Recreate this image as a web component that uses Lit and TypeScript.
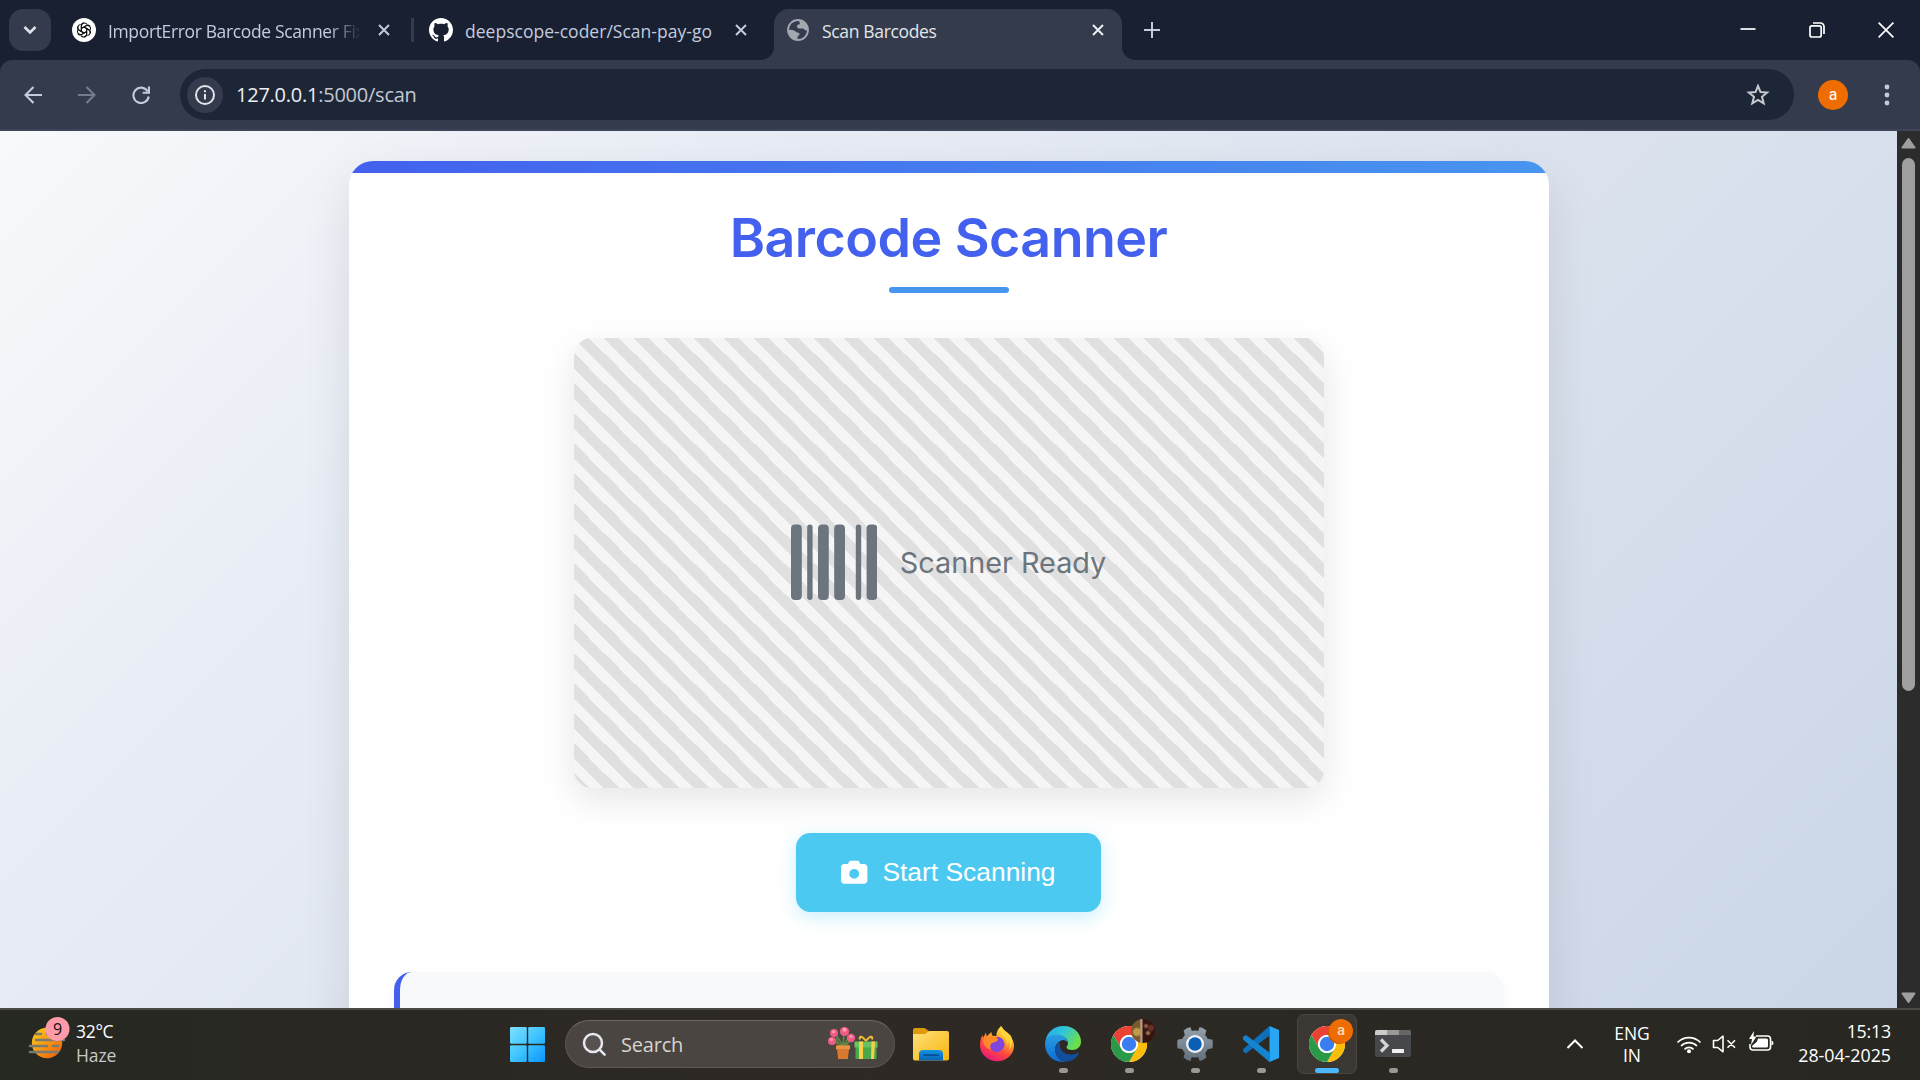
import { LitElement, html, css, svg } from "lit";
import { customElement } from "lit/decorators.js";

const closeGlyph = (cls: string) => html`<svg class="x ${cls}" viewBox="0 0 12 12"><path d="M1 1l10 10M11 1L1 11" /></svg>`;

const chromeLogo = html`<svg class="logo" viewBox="0 0 48 48">
  <circle cx="24" cy="24" r="24" fill="#fff" />
  <path d="M3.2 12A24 24 0 0 1 44.8 12L24 12A12 12 0 0 0 13.6 30Z" fill="#ea4335" />
  <path d="M44.8 12A24 24 0 0 1 24 48L34.4 30A12 12 0 0 0 24 12Z" fill="#fbbc0b" />
  <path d="M24 48A24 24 0 0 1 3.2 12L13.6 30A12 12 0 0 0 34.4 30Z" fill="#2a9a48" />
  <circle cx="24" cy="24" r="12" fill="#fff" />
  <circle cx="24" cy="24" r="9.6" fill="#3a7df0" />
</svg>`;

@customElement("browser-tabs")
class BrowserTabs extends LitElement {
  static styles = css`
    :host { display: flex; height: 60px; background: #182031; font-family: "Open Sans", "Noto Sans", sans-serif; font-size: 17.5px; color: #c3cbdf; }
    .search { box-sizing: border-box; width: 42px; height: 42px; margin: 9px 0 0 9px; border-radius: 14px; background: #333b4c; display: flex; align-items: center; justify-content: center; }
    .search svg { width: 14px; height: 10px; fill: none; stroke: #dfe2ea; stroke-width: 2.6; }
    .tab { box-sizing: border-box; display: flex; align-items: center; height: 51px; margin-top: 9px; padding-bottom: 9px; }
    .t1 { width: 360px; padding-left: 21px; }
    .t2 { width: 348px; padding-left: 15px; }
    .t3 { width: 348px; margin-left: 12px; padding-left: 13px; background: #333b4c; border-radius: 15px 15px 0 0; color: #e3e5ea; position: relative; }
    .t3::before, .t3::after { content: ""; position: absolute; bottom: 0; width: 13px; height: 13px; }
    .t3::before { left: -13px; background: radial-gradient(circle at 0 0, transparent 12.6px, #333b4c 13.2px); }
    .t3::after { right: -13px; background: radial-gradient(circle at 100% 0, transparent 12.6px, #333b4c 13.2px); }
    .fav { width: 24px; height: 24px; flex: none; }
    .fav.small { width: 22px; height: 22px; }
    .title { margin-left: 12px; white-space: nowrap; overflow: hidden; line-height: 30px; padding-top: 1px; height: 30px; }
    .t1 .title { width: 251px; letter-spacing: -0.36px; -webkit-mask-image: linear-gradient(90deg, #000 220px, transparent 254px); mask-image: linear-gradient(90deg, #000 220px, transparent 254px); }
    .t2 .title { width: 250px; letter-spacing: 0.02px; }
    .t3 .title { width: 250px; margin-left: 13px; letter-spacing: -0.34px; }
    .x { width: 12px; height: 12px; fill: none; stroke: #c3cbdf; stroke-width: 2; margin-left: 19px; flex: none; }
    .x.lit { stroke: #eceef2; margin-left: 20px; }
    .t2 .x { margin-left: 20px; }
    .sep { width: 3px; height: 24px; margin-top: 18px; background: #333b4c; }
    .plus { width: 16px; height: 16px; margin: 22px 0 0 22px; fill: none; stroke: #c3cbdf; stroke-width: 2; }
    .controls { display: flex; margin: 22px 26.5px 0 auto; gap: 53px; }
    .controls svg { width: 16px; height: 16px; fill: none; stroke: #fff; stroke-width: 1.7; }
  `;
  render() {
    return html`
      <div class="search"><svg viewBox="0 0 14 10"><path d="M1.5 2l5.5 5.5L12.5 2" /></svg></div>
      <div class="tab t1">
        <svg class="fav" viewBox="0 0 24 24"><circle cx="12" cy="12" r="12" fill="#fff" />
          <g fill="none" stroke="#111" stroke-width="1.05">
            ${[0, 60, 120, 180, 240, 300].map((a) => svg`<path transform="rotate(${a} 12 12)" d="M9.4 13.6V8.1a3.1 3.1 0 0 1 5.6-1.7M9.4 10.4l4.8-2.8a3.1 3.1 0 0 1 4 .8" />`)}
          </g></svg>
        <span class="title">ImportError Barcode Scanner Fix</span>${closeGlyph("")}
      </div>
      <div class="sep"></div>
      <div class="tab t2">
        <svg class="fav" viewBox="0 0 16 16"><path fill="#fff" d="M8 0C3.58 0 0 3.58 0 8c0 3.54 2.29 6.53 5.47 7.59.4.07.55-.17.55-.38 0-.19-.01-.82-.01-1.49-2.01.37-2.53-.49-2.69-.94-.09-.23-.48-.94-.82-1.13-.28-.15-.68-.52-.01-.53.63-.01 1.08.58 1.23.82.72 1.21 1.87.87 2.33.66.07-.52.28-.87.51-1.07-1.78-.2-3.64-.89-3.64-3.95 0-.87.31-1.59.82-2.15-.08-.2-.36-1.02.08-2.12 0 0 .67-.21 2.2.82.64-.18 1.32-.27 2-.27s1.36.09 2 .27c1.53-1.04 2.2-.82 2.2-.82.44 1.1.16 1.92.08 2.12.51.56.82 1.27.82 2.15 0 3.07-1.87 3.75-3.65 3.95.29.25.54.73.54 1.48 0 1.07-.01 1.93-.01 2.2 0 .21.15.46.55.38A8.01 8.01 0 0 0 16 8c0-4.42-3.58-8-8-8z" /></svg>
        <span class="title">deepscope-coder/Scan-pay-go</span>${closeGlyph("")}
      </div>
      <div class="tab t3">
        <svg class="fav small" viewBox="0 0 22 22"><circle cx="11" cy="11" r="10" fill="#333b4c" stroke="#a3a7ae" stroke-width="1.8" />
          <path fill="#a3a7ae" d="M11.5 1c5.2.3 9.3 4.5 9.5 9.5-.8 1-1.7 1.2-2.7.8-1-.5-1.3-1.6-2.6-1.8h-3.2c-1.6 0-2.5-.9-2.5-2.3 0-1 .5-1.6 1.4-1.7 1-.1 1.7-.5 1.4-1.6-.2-1-.9-1.6-1.3-2.900zM1 11c2.500-.4 4.500-.2 6.500.8 1.700.8 2 1.900 3.700 2 1.300.1 1.700 1 1.200 2-.6 1.200-1.900 1.100-1.900 2.500V21C5 20.700 1 16.500 1 11z" /></svg>
        <span class="title">Scan Barcodes</span>${closeGlyph("lit")}
      </div>
      <svg class="plus" viewBox="0 0 16 16"><path d="M8 0v16M0 8h16" /></svg>
      <div class="controls">
        <svg viewBox="0 0 16 16"><path d="M.5 7h15" /></svg>
        <svg viewBox="0 0 16 16"><rect x="1" y="3.8" width="11.2" height="11.2" rx="2" /><path d="M4 1h7.500a3.500 3.500 0 0 1 3.500 3.500v7.500" /></svg>
        <svg viewBox="0 0 16 16"><path d="M.6.6l14.800 14.800M15.400.6L.6 15.400" /></svg>
      </div>`;
  }
}

@customElement("browser-toolbar")
class BrowserToolbar extends LitElement {
  static styles = css`
    :host { display: block; background: #182031; }
    .bar { box-sizing: border-box; height: 71px; display: flex; align-items: flex-start; padding-top: 9px; background: #333b4c; border-radius: 12px 12px 0 0; border-bottom: 2px solid #3e4558; font-family: "Open Sans", "Noto Sans", sans-serif; }
    .nav { display: flex; align-items: center; gap: 36px; height: 51px; margin-left: 24px; width: 156px; }
    .nav svg { width: 18px; height: 18px; fill: none; stroke: #c3cbdf; stroke-width: 2.1; flex: none; }
    .nav .off { stroke: #757c8a; }
    .omni { box-sizing: border-box; width: 1614px; height: 51px; border-radius: 26px; background: #1d2636; display: flex; align-items: center; padding: 0 24px 0 7px; }
    .info { width: 36px; height: 36px; border-radius: 50%; background: #333b4c; display: flex; align-items: center; justify-content: center; }
    .info svg { width: 20px; height: 20px; fill: none; stroke: #e3e5ea; stroke-width: 2; }
    .url { margin-left: 13px; font-size: 20px; letter-spacing: -0.24px; color: #c4c8d1; line-height: 30px; }
    .url b { font-weight: 400; color: #eceef2; }
    .star { width: 24px; height: 24px; margin-left: auto; fill: none; stroke: #c7c9cf; stroke-width: 2; }
    .avatar { width: 30px; height: 30px; margin: 11px 0 0 24px; border-radius: 50%; background: #ef6c00; color: #fff; font: 16px/29px Roboto, sans-serif; text-align: center; }
    .dots { width: 6px; height: 24px; margin: 14px 0 0 36px; fill: #c3cbdf; }
  `;
  render() {
    return html`<div class="bar">
      <div class="nav">
        <svg viewBox="0 0 18 18"><path d="M18 9H1.800M9.500 1L1.500 9l8 8" /></svg>
        <svg class="off" viewBox="0 0 18 18"><path d="M0 9h16.200M8.500 1l8 8-8 8" /></svg>
        <svg viewBox="0 0 18 18"><path d="M15.600 5.200A7.700 7.700 0 1 0 16.700 10.500M17 .5v6.300h-6.300" /></svg>
      </div>
      <div class="omni">
        <span class="info"><svg viewBox="0 0 20 20"><circle cx="10" cy="10" r="9" /><path d="M10 9v5.500M10 5.300v2" /></svg></span>
        <span class="url"><b>127.0.0.1</b>:5000/scan</span>
        <svg class="star" viewBox="0 0 24 24"><path d="M12 3l2.500 6.100 6.600.5-5.100 4.200 1.700 6.500L12 16.800l-5.700 3.500L8 13.800 2.900 9.600l6.600-.5z" /></svg>
      </div>
      <div class="avatar">a</div>
      <svg class="dots" viewBox="0 0 6 24"><circle cx="3" cy="4" r="2.4" /><circle cx="3" cy="12" r="2.4" /><circle cx="3" cy="20" r="2.4" /></svg>
    </div>`;
  }
}

@customElement("scanner-page")
class ScannerPage extends LitElement {
  static styles = css`
    :host { display: flex; height: 877px; overflow: hidden; }
    .view { flex: 1; height: 1382px; background: linear-gradient(135deg, #f8f9fb 0%, #e9edf5 21%, #c3d0e3 100%); display: flex; justify-content: center; }
    .lift { width: 1200px; height: 1322px; margin-top: 30px; border-radius: 24px; box-shadow: 0 18px 48px rgba(0, 0, 0, 0.1); }
    .card { box-sizing: border-box; width: 1200px; height: 1322px; border-radius: 24px; overflow: hidden; background: #fff; display: flex; flex-direction: column; align-items: center; }
    .stripe { width: 100%; height: 12px; flex: none; background: linear-gradient(90deg, #4361ee, #4895ef); }
    h1 { margin: 32px 0 0; font: 600 53.76px/65px Inter, sans-serif; letter-spacing: -0.55px; color: #4361ee; }
    .rule { width: 120px; height: 6px; margin-top: 17px; border-radius: 3px; background: #4895ef; }
    .scanner { width: 750px; height: 450px; margin-top: 45px; flex: none; border-radius: 18px; box-shadow: 0 12px 36px rgba(0, 0, 0, 0.1); background-color: #f5f5f5; background-image: linear-gradient(45deg, #e0e0e0 25%, transparent 25%, transparent 50%, #e0e0e0 50%, #e0e0e0 75%, transparent 75%, transparent); background-size: 30px 30px; display: flex; align-items: center; justify-content: center; gap: 22.8px; color: #6c757d; font: 28.8px/40px Inter, sans-serif; }
    .scanner svg { width: 86.4px; height: 86.4px; margin-bottom: 2px; fill: #6c757d; }
    .start { box-sizing: border-box; width: 305px; height: 79px; margin-top: 45px; flex: none; border: 0; border-radius: 14.4px; background: #4cc9f0; color: #fff; font: 26.4px/30px "Liberation Sans", Arial, sans-serif; display: flex; align-items: center; justify-content: center; gap: 14.6px; box-shadow: 0 5px 18px rgba(76, 201, 240, 0.3); padding: 0; }
    .start span { padding-bottom: 2px; }
    .start svg { width: 26.4px; height: 26.4px; fill: #fff; }
    .result { box-sizing: border-box; width: 1110px; height: 300px; margin-top: 60px; border-left: 6px solid #4361ee; border-radius: 18px; background: #f8f9fb; box-shadow: 0 5px 18px rgba(0, 0, 0, 0.03); }
    .scroll { width: 23px; height: 877px; background: #2c2c2c; display: flex; flex-direction: column; align-items: center; }
    .scroll svg { width: 15px; height: 12px; fill: #9f9f9f; stroke: #9f9f9f; stroke-width: 2; stroke-linejoin: round; }
    .up { margin-top: 6px; }
    .thumb { width: 13px; height: 533px; margin-top: 9px; border-radius: 7px; background: #9f9f9f; }
    .down { margin: auto 0 4px; }
  `;
  render() {
    const bars = [[0, 64], [96, 32], [160, 64], [256, 64], [384, 32], [448, 64]];
    return html`
      <div class="view"><div class="lift"><div class="card">
        <div class="stripe"></div>
        <h1>Barcode Scanner</h1>
        <div class="rule"></div>
        <div class="scanner">
          <svg viewBox="0 0 512 512">${bars.map(([x, w]) => svg`<rect x=${x} y="32" width=${w} height="448" rx=${w === 64 ? 24 : 16} />`)}</svg>
          <span>Scanner Ready</span>
        </div>
        <button class="start">
          <svg viewBox="0 0 512 512"><path d="M149.100 64.800L138.700 96H64C28.700 96 0 124.700 0 160V416c0 35.300 28.700 64 64 64H448c35.300 0 64-28.700 64-64V160c0-35.300-28.700-64-64-64H373.300L362.900 64.800C356.400 45.200 338.100 32 317.400 32H194.600c-20.700 0-39 13.200-45.500 32.800zM256 192a96 96 0 1 1 0 192 96 96 0 1 1 0-192z" /></svg>
          <span>Start Scanning</span>
        </button>
        <div class="result"></div>
      </div></div></div>
      <div class="scroll">
        <svg class="up" viewBox="0 0 15 12"><path d="M7.500 2L13.500 10.500H1.500z" /></svg>
        <div class="thumb"></div>
        <svg class="down" viewBox="0 0 15 12"><path d="M7.500 10L13.500 1.500H1.500z" /></svg>
      </div>`;
  }
}

@customElement("task-bar")
class TaskBar extends LitElement {
  static styles = css`
    :host { box-sizing: border-box; display: flex; height: 72px; border-top: 2px solid #4a4945; background: linear-gradient(90deg, #262822 0%, #2b2824 22%, #2e2925 45%, #2b2823 75%, #282721 100%); color: #fff; font-family: "Open Sans", "Noto Sans", sans-serif; }
    .weather { box-sizing: border-box; width: 494px; padding-left: 28px; display: flex; }
    .weather svg { width: 42px; height: 46px; margin-top: 6px; }
    .weather div { margin: 9px 0 0 6px; font-size: 17.5px; line-height: 24px; letter-spacing: -0.3px; }
    .weather .cond { color: #c9c9c7; display: block; letter-spacing: -0.1px; }
    .badge { font: 16px "Open Sans", sans-serif; fill: #111; text-anchor: middle; }
    .start { width: 66px; display: flex; justify-content: center; padding-top: 17px; }
    .start svg { width: 35px; height: 35px; }
    .search { box-sizing: border-box; width: 330px; height: 48px; margin: 10px 3px 0 5px; border-radius: 24px; border: 1.5px solid #5b5753; border-top-color: #6d6966; background: #4a4541; display: flex; align-items: center; padding: 0 16px; font-size: 20px; color: #d6d4d1; }
    .lens { width: 24px; height: 24px; fill: #57524f; stroke: #e6e8ef; stroke-width: 2.5; stroke-linecap: round; }
    .search span { margin-left: 15px; letter-spacing: -0.2px; }
    .gift { width: 50px; height: 34px; margin-left: auto; }
    .app { width: 66px; height: 70px; display: flex; flex-direction: column; align-items: center; position: relative; }
    .app.on::before { content: ""; position: absolute; left: 3px; top: 4px; width: 58px; height: 58px; border: 1px solid #494541; border-radius: 7px; background: #3b3733; }
    .logo { width: 36px; height: 36px; margin-top: 16px; flex: none; position: relative; }
    .dot { width: 9px; height: 5px; margin-top: 6px; border-radius: 3px; background: #9b9894; position: relative; }
    .on .dot { width: 24px; background: #4cb8ff; }
    .face { position: absolute; left: 35px; top: 9px; width: 24px; height: 24px; border-radius: 50%; text-align: center; font: 500 15px/23px Roboto, sans-serif; color: #ffd9bd; }
    .photo { background:
      radial-gradient(circle at 15px 7px, #8f5f48 0 1px, transparent 3px),
      radial-gradient(circle at 17px 14px, #9d7358 0 1px, transparent 3px),
      radial-gradient(circle at 20px 9px, #6d3026 0 2px, transparent 4px),
      radial-gradient(circle at 6px 13px, #c39a4c 0 3px, transparent 5px),
      linear-gradient(90deg, #7a5c2c 0 38%, #b89a8c 40% 46%, #35160f 50%); }
    .a { background: #ef6c00; box-shadow: -2px 2px 0 -1px #c85c08; }
    .tray { margin-left: auto; display: flex; padding-right: 29px; }
    .tray svg { fill: none; stroke: #fff; stroke-width: 2; }
    .chev { width: 18px; height: 12px; margin-top: 28px; }
    .lang { width: 60px; margin: 12px 0 0 18px; text-align: center; font-size: 17.5px; line-height: 22px; }
    .wifi { width: 26px; height: 20px; margin: 24px 0 0 14px; }
    .vol { width: 25px; height: 20px; margin: 24px 0 0 10px; }
    .bat { width: 26px; height: 22px; margin: 21px 0 0 11px; }
    .clock { margin: 9px 0 0 17px; width: 100px; text-align: right; font-size: 17.8px; line-height: 24px; white-space: nowrap; }
    .time { letter-spacing: -0.2px; }
  `;
  render() {
    const dot = html`<span class="dot"></span>`;
    return html`
      <div class="weather">
        <svg viewBox="28 1014 42 46">
          <defs><linearGradient id="sun" x1="0" y1="0" x2="1" y2="1"><stop offset="0" stop-color="#ffd21c" /><stop offset="1" stop-color="#ee5a08" /></linearGradient></defs>
          <circle cx="47" cy="1041" r="15.2" fill="url(#sun)" />
          <g stroke="#7b7a70" stroke-width="2.6" stroke-linecap="round"><path d="M36 1032h5M47 1032h4M36 1038h28M30 1044h17M53 1044h5M30 1050h28" /></g>
          <circle cx="57.5" cy="1027" r="12" fill="#ff9aa8" />
          <text class="badge" x="57.5" y="1032.5">9</text>
        </svg>
        <div>32°C<span class="cond">Haze</span></div>
      </div>
      <div class="start"><svg viewBox="0 0 35 35">
        <defs><linearGradient id="win" gradientUnits="userSpaceOnUse" x1="0" y1="0" x2="35" y2="35"><stop offset="0" stop-color="#7fe0ff" /><stop offset=".5" stop-color="#3fc5ff" /><stop offset="1" stop-color="#0795ff" /></linearGradient></defs>
        <g fill="url(#win)"><rect width="16.8" height="16.8" rx="1.3" /><rect x="18.2" width="16.8" height="16.8" rx="1.3" /><rect y="18.2" width="16.8" height="16.8" rx="1.3" /><rect x="18.2" y="18.2" width="16.8" height="16.8" rx="1.3" /></g></svg></div>
      <div class="search">
        <svg class="lens" viewBox="0 0 24 24"><circle cx="11" cy="11" r="9" /><path d="M17.600 17.600l5 5" /></svg>
        <span>Search</span>
        <svg class="gift" viewBox="0 0 50 34">
          <path d="M15 19L5 14M15 19L7 6M15 19l1-12M15 19l8-12M15 19l10-7M12 19l-4-8M18 19l4-6" stroke="#5c8443" stroke-width="1.6" fill="none" />
          <g fill="#ef5b83"><circle cx="6" cy="6" r="4" /><circle cx="16.5" cy="4.5" r="4.6" /><circle cx="4" cy="14" r="4" /><circle cx="23" cy="11" r="4.2" /></g>
          <g fill="#ff9bb0"><circle cx="5.5" cy="4.8" r="1.6" /><circle cx="16.5" cy="2.8" r="2" /><circle cx="3.4" cy="12.6" r="1.6" /><circle cx="23" cy="9.5" r="1.6" /></g>
          <path d="M8 18.500h14v4h-1l-1.200 9.500H10.200L9 22.500H8z" fill="#d9792f" /><path d="M8 18.500h14v3.500H8z" fill="#e89244" />
          <rect x="27.5" y="19" width="21" height="13" fill="#48a84a" /><rect x="26.5" y="14.5" width="23" height="6" fill="#65c25c" />
          <path d="M31 14.500h4V32h-4zM43.500 14.500h3.500L46 32h-3z" fill="#f6d04b" />
          <path d="M38 14c-5-7-7-4-6-1.500M38 14c5-7 7-4 6-1.500" stroke="#f2bd35" stroke-width="2" fill="none" />
        </svg>
      </div>
      <div class="app"><svg class="logo" viewBox="0 0 36 36">
        <defs><linearGradient id="fol" x1="0" y1="0" x2="1" y2="1"><stop offset="0" stop-color="#ffe07a" /><stop offset="1" stop-color="#f9b50f" /></linearGradient><linearGradient id="fb" x1="0" y1="0" x2="0" y2="1"><stop offset="0" stop-color="#1593e2" /><stop offset="1" stop-color="#0864b8" /></linearGradient></defs>
        <path d="M0 4a2 2 0 0 1 2-2h9q1 0 2 1l3 2v6H0z" fill="#dd9a08" /><path d="M0 8h11q1.500 0 3-1.500T17 5h17q2 0 2 2v25.500q0 2-2 2H2q-2 0-2-2z" fill="url(#fol)" />
        <path d="M6 34.500V28q0-4 4-4h16q4 0 4 4v6.500z" fill="url(#fb)" /><path d="M11 29.200h14" stroke="#064f96" stroke-width="1.7" stroke-linecap="round" /></svg></div>
      <div class="app"><svg class="logo" viewBox="0 0 36 36">
        <defs><linearGradient id="ff" x1=".8" y1="0" x2=".3" y2="1"><stop offset="0" stop-color="#fff04a" /><stop offset=".35" stop-color="#ffae26" /><stop offset=".65" stop-color="#ff4b3c" /><stop offset="1" stop-color="#e8157e" /></linearGradient></defs>
        <path d="M22 0q2 4 5.500 6.500 2 1.500 2.500 4 0-1.500-.3-2.500Q35 14 35 20c-.3 9-8 15.300-17 15.300S1 28 1 19.500Q1 13 3.500 9L4 12l3-5.500q0 2 .8 3.800Q10 8 12.500 6q-.3 2 1 3.800l4 .2Q17 5 22 0z" fill="url(#ff)" />
        <circle cx="18" cy="18.3" r="7.6" fill="#7f46dd" />
        <path d="M5 10l6 1q3-1 6.500 0l1.500 2.500q-1 2-3 2.500l-4 1.500q-1.500 3 0 6-6-1-8-7.500z" fill="#ff8b28" />
        <path d="M22 2q-1 6 3 9 4 4 3 9 2-3 1.600-6.500Q32 18 30 24q5-7 2-14l-3-3q-4-2-7-7z" fill="#ffd53a" /></svg></div>
      <div class="app"><svg class="logo" viewBox="0 0 36 36">
        <defs><linearGradient id="e1" x1="0" y1="0" x2="1" y2=".5"><stop offset="0" stop-color="#22a6ea" /><stop offset=".5" stop-color="#30c6d8" /><stop offset="1" stop-color="#6ce04a" /></linearGradient><linearGradient id="e2" x1="0" y1="0" x2="0" y2="1"><stop offset="0" stop-color="#2a9ee2" /><stop offset="1" stop-color="#0c6bd3" /></linearGradient></defs>
        <path d="M.5 15C2 6 9 0 18.500 0 29 0 36 7.500 36 15.500c0 5.500-4 8.500-8.500 8.500-4 0-6-1.500-6-2.800 0-1 1.500-1.700 1.500-4.200C23 12 17 9 11.500 9 7 9 3 11 .5 15z" fill="url(#e1)" />
        <path d="M0 18C0 12 5 8.500 11.500 8.500 17 8.500 23 12 22.600 17c-.5-2-2.600-3-4.600-3-5 1-8 5-8 9.500C10 30 15 35 21 35.700 9 37.500 0 29 0 18z" fill="url(#e2)" />
        <path d="M15 15.500c-4 3-6 7.500-4 12 2 5 7 8.300 11.500 8.100 5-.6 9-3.600 11-7.600.4-1-.4-1.500-1.200-1-6 3-14.300 1.500-16.600-4.500-.9-2.500-.9-5-.7-7z" fill="#114f9c" /></svg>${dot}</div>
      <div class="app">${chromeLogo}<span class="face photo"></span>${dot}</div>
      <div class="app"><svg class="logo" viewBox="0 0 36 36">
        <defs><linearGradient id="gr" gradientUnits="userSpaceOnUse" x1="0" y1="1" x2="0" y2="35"><stop offset="0" stop-color="#93a0ac" /><stop offset="1" stop-color="#62707d" /></linearGradient></defs>
        <g fill="url(#gr)"><circle cx="18" cy="18" r="13.6" />
          <path d="M.6 13.800l6-1.300v11l-6-1.300q-.8-4.200 0-8.400zM35.400 13.800l-6-1.300v11l6-1.300q.8-4.200 0-8.400z" />
          <path d="M6.600 4.600q3-2.800 6.800-3.700L15.500 7l-7 4.500zM29.400 4.600q-3-2.800-6.800-3.700L20.500 7l7 4.500zM6.600 31.400q3 2.800 6.800 3.700l2.100-6.100-7-4.500zM29.400 31.400q-3 2.800-6.800 3.700L20.500 29l7-4.500z" /></g>
        <circle cx="18" cy="18" r="9" fill="#f0f2f4" /><circle cx="18" cy="18" r="6.7" fill="#0a5fb4" /></svg>${dot}</div>
      <div class="app"><svg class="logo" viewBox="0 0 36 36">
        <path d="M26.500 9.500L3 27.500 0 25.200v-2L26.500 0z" fill="#0f6fb8" /><path d="M26.500 26.500L3 9 0 11v2.500L26.500 36z" fill="#1484cf" />
        <path d="M26.500 0L36 4v28l-9.500 4q-1 0 0-1.500z" fill="#27a6f4" /></svg>${dot}</div>
      <div class="app on">${chromeLogo}<span class="face a">a</span>${dot}</div>
      <div class="app"><svg class="logo" viewBox="0 0 36 36">
        <rect y="4" width="36" height="27" rx="2" fill="#46484b" /><path d="M0 9V6q0-2 2-2h10v5z" fill="#cbcbcb" /><path d="M12 4h12v5H12z" fill="#999" /><path d="M24 4h10q2 0 2 2v3H24z" fill="#666" />
        <path d="M6 13.500l6 6-6 6" stroke="#d5d5d5" stroke-width="3.2" fill="none" /><rect x="17" y="23" width="12" height="4" rx=".6" fill="#f0f0f0" /></svg>${dot}</div>
      <div class="tray">
        <svg class="chev" viewBox="0 0 18 12"><path d="M1.500 10L9 2.500 16.500 10" /></svg>
        <div class="lang">ENG<br />IN</div>
        <svg class="wifi" viewBox="0 0 26 20"><path d="M1.500 8.500a16 16 0 0 1 23 0M5 12a11.300 11.300 0 0 1 16 0M8.500 15.300a6.400 6.400 0 0 1 9 0" stroke-width="1.7" /><circle cx="13" cy="17.3" r="2" fill="#fff" stroke="none" /></svg>
        <svg class="vol" viewBox="0 0 25 20"><path d="M1.500 6.500h4.200L11 2.200v15.600L5.700 13.500H1.500zM15.500 6.300l7.500 7.500M23 6.300l-7.500 7.500" stroke-width="1.6" stroke-linejoin="round" /></svg>
        <svg class="bat" viewBox="0 0 26 22"><path d="M8 5h11.500a3 3 0 0 1 3 3v8a3 3 0 0 1-3 3H5a3 3 0 0 1-3-3v-3" stroke-width="1.6" /><path d="M10 7.500h8.500q1.500 0 1.500 1.500v6q0 1.500-1.500 1.500h-13q-1.500 0-1.500-1.500l5-4.500zM23.500 9.500q2 .5 2 2.500t-2 2.500zM6 0L1 8h3l-1 6 5.500-8.500H5.500z" fill="#fff" stroke="none" /></svg>
        <div class="clock"><span class="time">15:13</span><br />28-04-2025</div>
      </div>`;
  }
}

@customElement("app-root")
class AppRoot extends LitElement {
  static styles = css`
    :host { display: block; width: 1920px; height: 1080px; overflow: hidden; }
  `;
  render() {
    return html`<browser-tabs></browser-tabs><browser-toolbar></browser-toolbar><scanner-page></scanner-page><task-bar></task-bar>`;
  }
}
